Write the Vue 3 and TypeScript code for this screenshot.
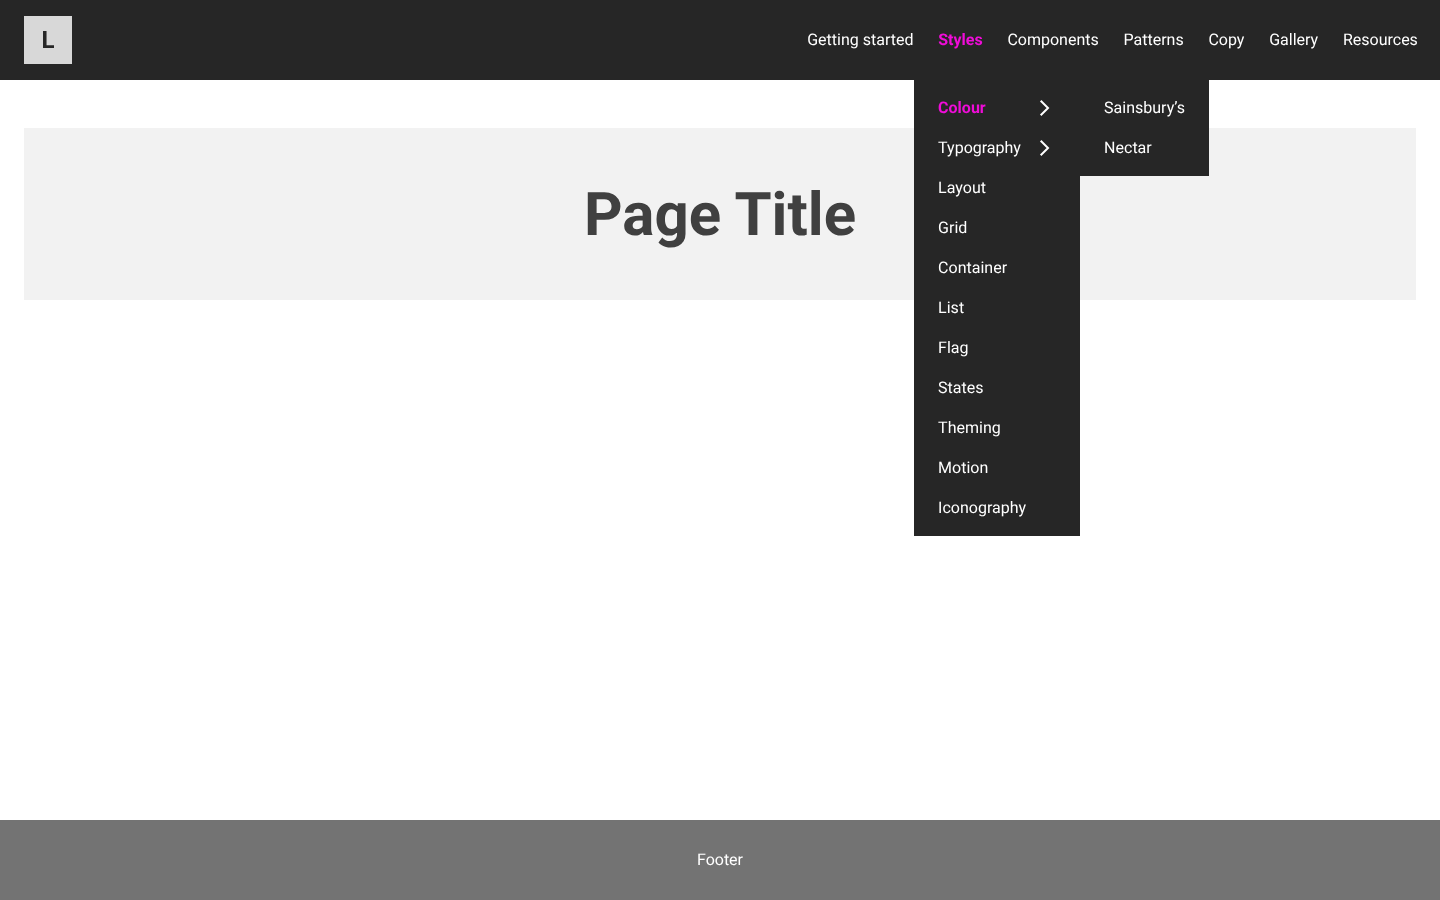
<script setup lang="ts">
const navItems = ['Getting started', 'Styles', 'Components', 'Patterns', 'Copy', 'Gallery', 'Resources']
const menu = [
  { label: 'Colour', active: true, more: true },
  { label: 'Typography', more: true },
  { label: 'Layout' },
  { label: 'Grid' },
  { label: 'Container' },
  { label: 'List' },
  { label: 'Flag' },
  { label: 'States' },
  { label: 'Theming' },
  { label: 'Motion' },
  { label: 'Iconography' },
]
const sub = ['Sainsbury’s', 'Nectar']
</script>

<template>
  <div class="page">
    <header class="header">
      <div class="logo">L</div>
      <nav class="nav">
        <div v-for="item in navItems" :key="item" class="nav-item" :class="{ active: item === 'Styles' }">
          <span>{{ item }}</span>
          <ul v-if="item === 'Styles'" class="menu">
            <li v-for="m in menu" :key="m.label" class="menu-item" :class="{ active: m.active }">
              <span>{{ m.label }}</span>
              <svg v-if="m.more" class="chev" width="24" height="24" viewBox="0 0 24 24" fill="none">
                <path d="M8.7 4.7 L16 12 L8.7 19.3" stroke="#fff" stroke-width="2" />
              </svg>
              <ul v-if="m.active" class="submenu">
                <li v-for="s in sub" :key="s" class="sub-item">{{ s }}</li>
              </ul>
            </li>
          </ul>
        </div>
      </nav>
    </header>
    <main class="main">
      <div class="hero"><h1>Page Title</h1></div>
    </main>
    <footer class="footer">Footer</footer>
  </div>
</template>

<style>
body { margin: 0; }
</style>

<style scoped>
.page {
  min-height: 900px;
  display: flex;
  flex-direction: column;
  font-family: Roboto, sans-serif;
  font-size: 16px;
  line-height: 24px;
  text-rendering: geometricPrecision;
  will-change: transform;
}
.header {
  height: 80px;
  background: #262626;
  display: flex;
  align-items: center;
  justify-content: space-between;
  padding: 0 9.75px 0 24px;
}
.logo {
  width: 48px;
  height: 48px;
  background: #d8d8d8;
  color: #262626;
  display: flex;
  align-items: center;
  justify-content: center;
  font-size: 24px;
  font-weight: 700;
}
.nav { display: flex; height: 80px; }
.nav-item {
  position: relative;
  color: #fff;
  padding: 0 12.375px;
  display: flex;
  align-items: center;
}
.nav-item.active { color: #f00cd8; font-weight: 700; }
ul { list-style: none; margin: 0; padding: 0; }
.menu {
  position: absolute;
  top: 80px;
  left: -11.75px;
  width: 166px;
  background: #262626;
  padding: 8px 0;
  z-index: 2;
  color: #fff;
  font-weight: 400;
}
.menu-item {
  position: relative;
  height: 40px;
  display: flex;
  align-items: center;
  justify-content: space-between;
  padding: 0 24px;
}
.menu-item.active { color: #f00cd8; font-weight: 700; }
.submenu {
  position: absolute;
  top: -8px;
  left: 166px;
  width: 129px;
  background: #262626;
  padding: 8px 0;
  color: #fff;
  font-weight: 400;
}
.sub-item {
  height: 40px;
  display: flex;
  align-items: center;
  padding: 0 24px;
  white-space: nowrap;
}
.main { flex: 1; padding: 48px 24px 0; }
.hero {
  height: 172px;
  background: #f2f2f2;
  display: flex;
  align-items: center;
  justify-content: center;
}
.hero h1 {
  margin: 2px 0 0;
  font-size: 60px;
  line-height: 72px;
  font-weight: 700;
  color: #404040;
}
.footer {
  height: 80px;
  background: #737373;
  color: #fff;
  display: flex;
  align-items: center;
  justify-content: center;
}
</style>
